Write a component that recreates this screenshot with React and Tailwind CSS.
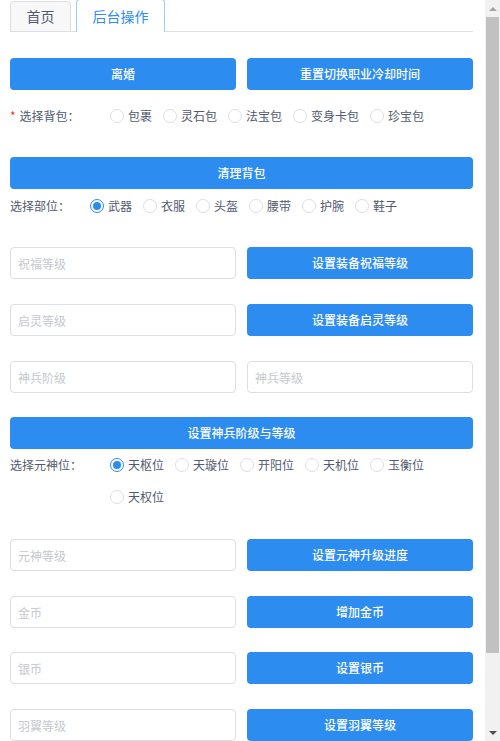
import React from "react";

const font = { fontFamily: '"Noto Sans CJK SC", "Microsoft YaHei", sans-serif' };

const Btn = ({ children, className = "" }) => (
  <button className={`h-[32px] rounded-[4px] bg-[#2d8cf0] text-[12px] font-medium text-white ${className}`}>
    {children}
  </button>
);

const Input = ({ placeholder }) => (
  <input
    placeholder={placeholder}
    className="h-[32px] w-[226px] rounded-[4px] border border-[#dcdee2] bg-white px-[7px] text-[12px] text-[#515a6e] outline-none placeholder:text-[#c5c8ce]"
  />
);

const Radio = ({ label, checked }) => (
  <label className="mr-[11px] flex h-[32px] items-center text-[12px] text-[#515a6e]">
    <span
      className={`mr-[4px] flex h-[14px] w-[14px] items-center justify-center rounded-full border bg-white ${
        checked ? "border-[#2d8cf0]" : "border-[#dcdee2]"
      }`}
    >
      {checked && <span className="h-[8px] w-[8px] rounded-full bg-[#2d8cf0]" />}
    </span>
    {label}
  </label>
);

const RadioRow = ({ label, width, items, checked, required, className = "" }) => (
  <div className={`flex text-[12px] text-[#515a6e] ${className}`}>
    <div className="flex h-[32px] shrink-0 items-center" style={{ width }}>
      {required && <span className="mr-[4px] text-[#ed4014]">*</span>}
      {label}
    </div>
    <div className="flex flex-wrap">
      {items.map((it) => (
        <Radio key={it} label={it} checked={it === checked} />
      ))}
    </div>
  </div>
);

const Row = ({ placeholder, action, className = "" }) => (
  <div className={`flex justify-between ${className}`}>
    <Input placeholder={placeholder} />
    <Btn className="w-[226px]">{action}</Btn>
  </div>
);

const Scrollbar = () => (
  <div className="flex w-[15px] shrink-0 flex-col bg-[#f1f1f1]">
    <div className="flex h-[17px] items-center justify-center">
      <span className="h-0 w-0 border-x-[4px] border-b-[4px] border-x-transparent border-b-[#a3a3a3]" />
    </div>
    <div className="flex-1 px-[1px]">
      <div className="h-[636px] bg-[#c1c1c1]" />
    </div>
    <div className="flex h-[17px] items-center justify-center">
      <span className="h-0 w-0 border-x-[4px] border-t-[4px] border-x-transparent border-t-[#505050]" />
    </div>
  </div>
);

export default function App() {
  return (
    <div className="flex h-[741px] w-[500px] overflow-hidden bg-white" style={font}>
      <div className="w-[485px] shrink-0 px-[10px]">
        <div className="w-[463px]">
          {/* tabs */}
          <div className="flex h-[32px] items-end gap-[5px] border-b border-[#dcdee2]">
            <div className="mb-[-1px] flex h-[31px] w-[61px] items-center justify-center rounded-t-[4px] border border-[#dcdee2] bg-[#f8f8f9] text-[14px] text-[#515a6e]">
              首页
            </div>
            <div className="mb-[-1px] flex h-[33px] w-[89px] items-center justify-center rounded-t-[4px] border border-b-0 border-[#9ccdf7] bg-white text-[14px] text-[#2d8cf0]">
              后台操作
            </div>
          </div>

          <div className="mt-[26px] flex justify-between">
            <Btn className="w-[226px]">离婚</Btn>
            <Btn className="w-[226px]">重置切换职业冷却时间</Btn>
          </div>

          <RadioRow
            className="mt-[10px]"
            required
            label="选择背包："
            width={100}
            items={["包裹", "灵石包", "法宝包", "变身卡包", "珍宝包"]}
          />

          <Btn className="mt-[25px] w-full">清理背包</Btn>

          <RadioRow
            className="mt-[1px]"
            label="选择部位："
            width={80}
            items={["武器", "衣服", "头盔", "腰带", "护腕", "鞋子"]}
            checked="武器"
          />

          <Row className="mt-[25px]" placeholder="祝福等级" action="设置装备祝福等级" />
          <Row className="mt-[25px]" placeholder="启灵等级" action="设置装备启灵等级" />

          <div className="mt-[25px] flex justify-between">
            <Input placeholder="神兵阶级" />
            <Input placeholder="神兵等级" />
          </div>

          <Btn className="mt-[24px] w-full">设置神兵阶级与等级</Btn>

          <RadioRow
            className="mt-0"
            label="选择元神位："
            width={100}
            items={["天枢位", "天璇位", "开阳位", "天机位", "玉衡位", "天权位"]}
            checked="天枢位"
          />

          <Row className="mt-[26px]" placeholder="元神等级" action="设置元神升级进度" />
          <Row className="mt-[25px]" placeholder="金币" action="增加金币" />
          <Row className="mt-[24px]" placeholder="银币" action="设置银币" />
          <Row className="mt-[25px]" placeholder="羽翼等级" action="设置羽翼等级" />
        </div>
      </div>
      <Scrollbar />
    </div>
  );
}
